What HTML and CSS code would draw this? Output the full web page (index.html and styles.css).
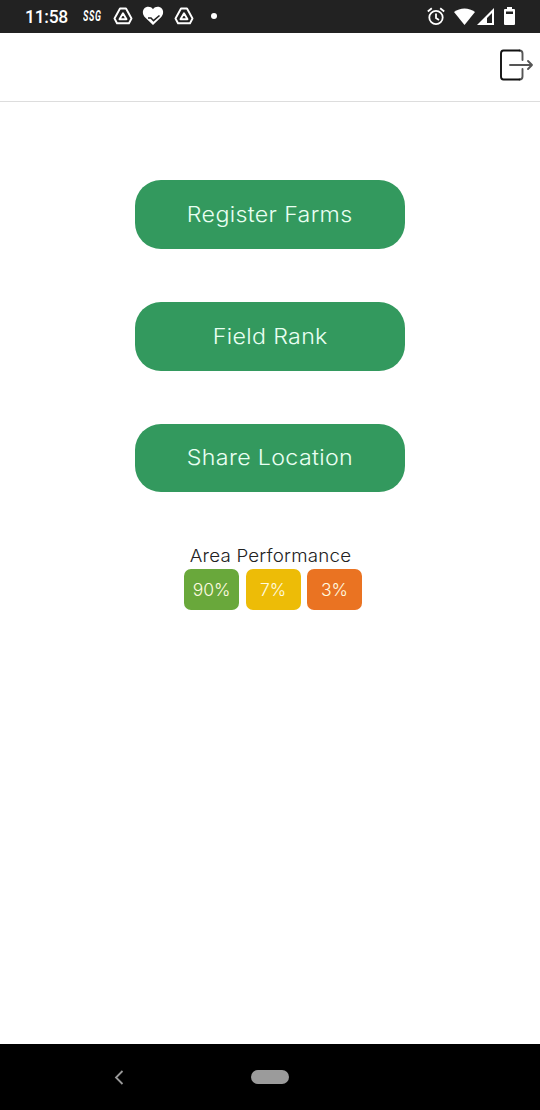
FILE: index.html
```html
<!DOCTYPE html>
<html lang="en">
<head>
<meta charset="utf-8">
<title>Farms</title>
<link rel="stylesheet" href="styles.css">
</head>
<body>
<div class="screen">
  <div class="status">
    <span class="time">11:58</span>
    <span class="ssg">SSG</span>
    <svg class="tri" width="20" height="18" viewBox="0 0 20 18" fill="none" stroke="#fff" stroke-width="1.9" stroke-linejoin="round"><path d="M7 1.500h6l5.500 10-2.500 4.700H4L1.500 11.500z"/><path d="M10 6.200l3.500 6h-7z"/></svg>
    <svg class="heart" width="22" height="20" viewBox="0 0 22 20"><path fill="#fff" d="M11 19L3.200 11.500C.5 9 .2 5 2 2.800 4.500 0 8.800.2 11 3.200c2.200-3 6.500-3.200 9-.4 1.800 2.200 1.500 6.200-1.200 8.700z"/><path d="M6 12h3l2.500 2.700 6-5.200" fill="none" stroke="#222" stroke-width="1.600"/></svg>
    <svg class="tri" width="20" height="18" viewBox="0 0 20 18" fill="none" stroke="#fff" stroke-width="1.900" stroke-linejoin="round"><path d="M7 1.500h6l5.500 10-2.500 4.700H4L1.500 11.500z"/><path d="M10 6.200l3.500 6h-7z"/></svg>
    <span class="dot"></span>
    <svg class="alarm" width="18" height="19" viewBox="0 0 18 19" fill="none" stroke="#fff" stroke-width="1.800"><circle cx="9" cy="10.500" r="6.700"/><path d="M9 6.500v4.500l3 2M.8 4.500l4-3.300M17.200 4.500l-4-3.300"/></svg>
    <svg class="wifi" width="21" height="17" viewBox="0 0 21 17"><path fill="#fff" d="M10.500 17L0 4C6 -.8 15-.8 21 4z"/></svg>
    <svg class="cell" width="17" height="17" viewBox="0 0 17 17"><path fill="#fff" fill-rule="evenodd" d="M17 0v17H0zM15 5l-5 5v5h5z"/></svg>
    <svg class="battery" width="11" height="18" viewBox="0 0 11 18"><path fill="#fff" fill-rule="evenodd" d="M3 0h5v2h2q1 0 1 1v14q0 1-1 1H1q-1 0-1-1V3q0-1 1-1h2zM2 4.500V7h7V4.500z"/></svg>
  </div>
  <header class="bar">
    <svg width="36" height="34" viewBox="0 0 36 34" fill="none" stroke-linecap="round" stroke-linejoin="round"><path stroke="#555" stroke-width="1.900" d="M23.500 12V5.500q0-3-3-3M23.500 21v7.500q0 3-3 3"/><path stroke="#111" stroke-width="1.900" d="M20.500 2.500h-16q-2.500 0-2.500 3v23q0 3 2.500 3h16"/><path stroke="#555" stroke-width="1.900" d="M11 17h22M29 13l4 4-4 4"/></svg>
  </header>
  <main class="content">
    <div class="button"><span class="caption">Register Farms</span></div>
    <div class="button"><span class="caption">Field Rank</span></div>
    <div class="button last"><span class="caption">Share Location</span></div>
    <div class="label">Area Performance</div>
    <div class="chips">
      <span class="chip green">90%</span>
      <span class="chip yellow">7%</span>
      <span class="chip orange">3%</span>
    </div>
  </main>
  <nav class="nav">
    <svg class="back" width="10" height="15" viewBox="0 0 10 15" fill="none" stroke="#999" stroke-width="1.800"><path d="M8.500 1L2 7.500 8.500 14"/></svg>
    <span class="home"></span>
  </nav>
</div>
</body>
</html>
```
FILE: styles.css
```css
* { box-sizing: border-box; }
body { margin: 0; background: #fff; }
.screen { width: 540px; height: 1110px; display: flex; flex-direction: column; font-family: Inter, sans-serif; }
.status { height: 33px; flex: none; background: #222; display: flex; align-items: center; color: #fff; padding: 0 25px 1px; }
.status svg { flex: none; }
.time { font: 500 19px/32px Roboto, sans-serif; width: 58px; letter-spacing: -0.3px; padding-top: 2px; transform: scaleX(.92); transform-origin: 0 50%; }
.ssg { font: italic 700 14px/30px Roboto, sans-serif; width: 30px; white-space: nowrap; letter-spacing: 1px; transform: scaleX(.64); transform-origin: 0 50%; }
.heart { margin: 0 10px 0 9px; }
.dot { width: 6px; height: 6px; border-radius: 50%; background: #fff; margin-left: 17px; }
.alarm { margin-left: auto; }
.wifi { margin-left: 9px; }
.cell { margin-left: 2px; }
.battery { margin-left: 10px; }
.bar { height: 69px; flex: none; border-bottom: 1px solid #ddd; display: flex; justify-content: flex-end; align-items: center; padding: 0 5px 5px 0; }
.content { flex: 1; display: flex; flex-direction: column; align-items: center; padding-top: 78px; }
.button { width: 270px; height: 69px; padding-bottom: 2px; margin-bottom: 53px; border-radius: 26px; background: #33995e; color: #e9fff2; display: flex; justify-content: center; align-items: center; font-size: 21.5px; font-weight: 350; white-space: nowrap; }
.last { height: 68px; }
.caption { letter-spacing: 0.3px; transform: scaleX(1.08); }
.label { height: 24px; line-height: 22px; font-size: 17.5px; font-weight: 350; color: #222; letter-spacing: 0.2px; white-space: nowrap; transform: scaleX(1.07); }
.chips { display: flex; gap: 6.5px; margin-left: 6px; }
.chip { width: 55px; height: 41px; border-radius: 7px; display: flex; align-items: center; justify-content: center; font-size: 17.5px; font-weight: 350; color: #fffbe0; }
.green { background: #69a83b; }
.yellow { background: #edbc07; }
.orange { background: #ea7322; }
.nav { height: 66px; flex: none; background: #000; display: flex; align-items: center; padding-left: 114px; }
.home { width: 38px; height: 14px; border-radius: 7px; background: #9b9b9b; margin-left: 127px; }
```
